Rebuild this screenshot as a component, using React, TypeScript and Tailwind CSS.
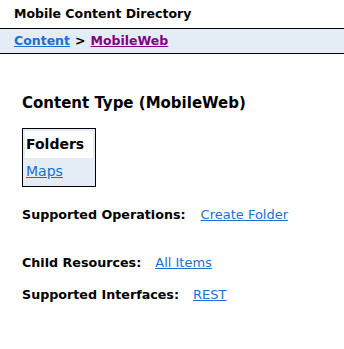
export default function App() {
  return (
    <div className="w-[344px] h-[349px] bg-white text-black font-['DejaVu_Sans',Verdana,sans-serif] text-[13px]">
      <div className="h-[28px] px-[14px] flex items-center font-bold text-[12.5px]">
        Mobile Content Directory
      </div>
      <div className="h-[26px] px-[14px] flex items-center border-y border-black bg-[#e4edf6] font-bold text-[12.5px]">
        <a href="#" className="text-[#1c6fd1] underline">Content</a>
        <span className="mx-[5px]">&gt;</span>
        <a href="#" className="text-[#800080] underline">MobileWeb</a>
      </div>
      <div className="px-[22px]">
        <h1 className="mt-[38px] font-bold text-[15px] leading-[22px]">Content Type (MobileWeb)</h1>
        <div className="mt-[14px] w-[74px] border border-black bg-[#e4edf6] p-[2px]">
          <div className="bg-white h-[27px] flex items-center px-[1px] font-bold text-[14px]">Folders</div>
          <div className="h-[26px] flex items-center px-[1px] text-[14px]">
            <a href="#" className="text-[#1c6fd1] underline">Maps</a>
          </div>
        </div>
        <div className="mt-[20px] flex items-center h-[16px] font-bold text-[12.7px]">
          Supported Operations:
          <a href="#" className="ml-[15px] font-normal text-[13px] text-[#1c6fd1] underline">Create Folder</a>
        </div>
        <div className="mt-[32px] flex items-center h-[16px] font-bold text-[12.7px]">
          Child Resources:
          <a href="#" className="ml-[14px] font-normal text-[13px] text-[#1c6fd1] underline">All Items</a>
        </div>
        <div className="mt-[16px] flex items-center h-[16px] font-bold text-[12.7px]">
          Supported Interfaces:
          <a href="#" className="ml-[14px] font-normal text-[13px] text-[#1c6fd1] underline">REST</a>
        </div>
      </div>
    </div>
  );
}
